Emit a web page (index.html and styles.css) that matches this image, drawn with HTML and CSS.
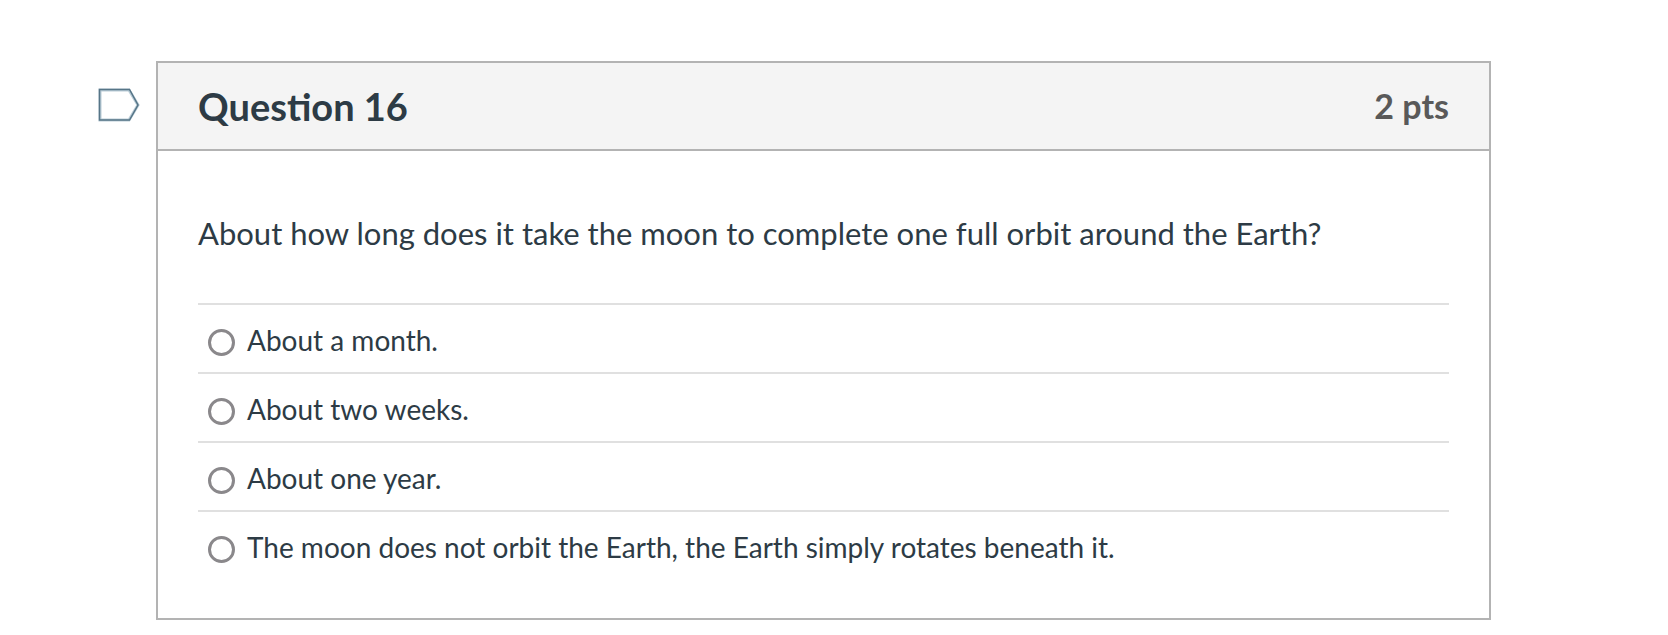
FILE: index.html
```html
<!DOCTYPE html>
<html lang="en">

<head>
    <meta charset="UTF-8" />
    <title>Question 16</title>
    <link rel="stylesheet" href="styles.css">
</head>

<body>
    <form class="quiz">
        <button type="button" class="flag" aria-label="Flag question">
            <svg width="42" height="34" viewBox="0 0 42 34">
                <path d="M2 2H31L40 17L31 32H2Z" fill="#fff" stroke="#b9cbd6" stroke-width="3" />
                <path d="M1.5 1.5H31.5L40 17L31.5 32H1.5Z" fill="none" stroke="#567587" stroke-width="1.5" />
            </svg>
        </button>

        <div class="question">
            <div class="header">
                <h2>Question 16</h2>
                <span class="points">2 pts</span>
            </div>

            <div class="content">
                <p class="text" id="text">About how long does it take the moon to complete one full orbit around the Earth?</p>

                <div class="answers" role="radiogroup" aria-labelledby="text">
                    <div class="answer">
                        <input type="radio" name="answer" id="answer1" />
                        <label for="answer1">About a month.</label>
                    </div>
                    <div class="answer">
                        <input type="radio" name="answer" id="answer2" />
                        <label for="answer2">About two weeks.</label>
                    </div>
                    <div class="answer">
                        <input type="radio" name="answer" id="answer3" />
                        <label for="answer3">About one year.</label>
                    </div>
                    <div class="answer">
                        <input type="radio" name="answer" id="answer4" />
                        <label for="answer4">The moon does not orbit the Earth, the Earth simply rotates beneath it.</label>
                    </div>
                </div>
            </div>
        </div>
    </form>
</body>

</html>
```

FILE: styles.css
```css
body {
    margin: 0;
    font-family: Lato, sans-serif;
    color: #2d3b45;
    background: #fff;
}

.quiz {
    display: flex;
    align-items: flex-start;
    gap: 16px;
    padding: 61px 177px 15px 98px;
}

.flag {
    margin-top: 27px;
    padding: 0;
    border: none;
    background: none;
    cursor: pointer;
}

.flag svg {
    display: block;
}

.question {
    flex: 1;
    border: 2px solid #b3b3b3;
}

.header {
    display: flex;
    justify-content: space-between;
    align-items: center;
    padding: 20px 40px;
    line-height: 46px;
    background: #f4f4f4;
    border-bottom: 2px solid #b3b3b3;
}

h2 {
    margin: 0;
    font-size: 38px;
}

.points {
    font-size: 34px;
    font-weight: bold;
    color: #595959;
}

.content {
    padding: 60px 40px 39px;
}

.text {
    margin: 0 0 48px;
    font-size: 31px;
    line-height: 44px;
}

.answer {
    display: flex;
    align-items: center;
    gap: 12px;
    padding: 15px 10px 12px;
    border-top: 2px solid #e0e0e0;
    font-size: 28px;
    line-height: 40px;
}

.answer input {
    appearance: none;
    width: 27px;
    height: 27px;
    margin: 4px 0 0;
    border: 3px solid #8a888b;
    border-radius: 50%;
    background: #fff;
}

.answer input:checked {
    background: #8a888b;
}
```
